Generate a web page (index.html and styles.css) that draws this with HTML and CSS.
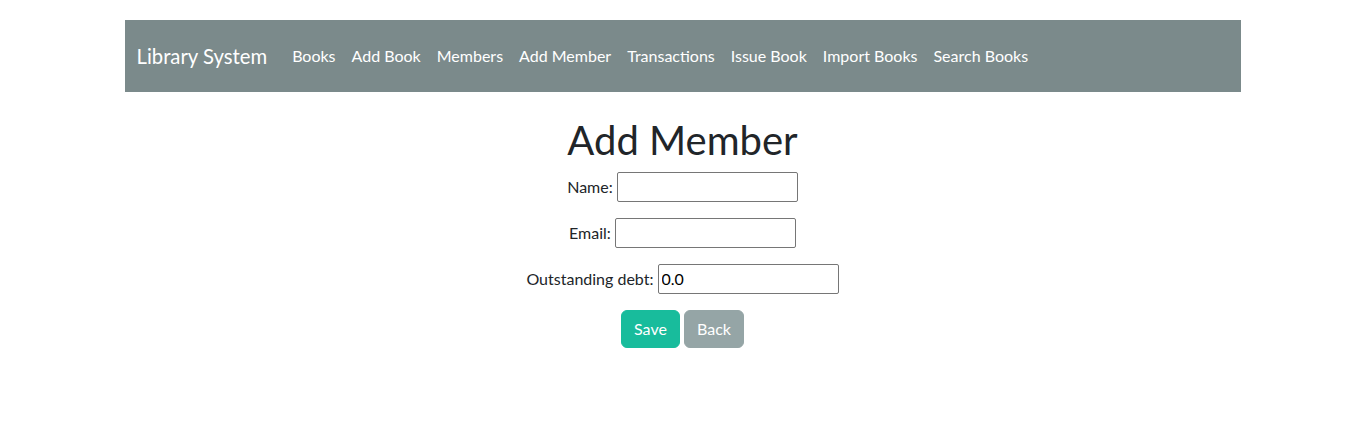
FILE: index.html
```html
<!DOCTYPE html>
<html lang="en">
<head>
<meta charset="utf-8">
<title>Add Member</title>
<link rel="stylesheet" href="styles.css">
</head>
<body>
<div class="container">
  <nav class="navbar">
    <a class="brand" href="#">Library System</a>
    <ul class="nav">
      <li><a class="nav-link" href="#">Books</a></li>
      <li><a class="nav-link" href="#">Add Book</a></li>
      <li><a class="nav-link" href="#">Members</a></li>
      <li><a class="nav-link" href="#">Add Member</a></li>
      <li><a class="nav-link" href="#">Transactions</a></li>
      <li><a class="nav-link" href="#">Issue Book</a></li>
      <li><a class="nav-link" href="#">Import Books</a></li>
      <li><a class="nav-link" href="#">Search Books</a></li>
    </ul>
  </nav>
  <main class="content">
    <h1 class="title">Add Member</h1>
    <form class="form">
      <p class="row"><label for="name">Name:</label> <input class="field" type="text" id="name"></p>
      <p class="row"><label for="email">Email:</label> <input class="field" type="text" id="email"></p>
      <p class="row"><label for="debt">Outstanding debt:</label> <input class="field" type="text" id="debt" value="0.0"></p>
      <div class="actions"><button class="btn btn-save" type="button">Save</button> <a class="btn btn-back" href="#">Back</a></div>
    </form>
  </main>
</div>
</body>
</html>
```
FILE: styles.css
```css
* { box-sizing: border-box; }
body {
  margin: 0;
  font-family: Lato, "Noto Sans", sans-serif;
  font-size: 16px;
  line-height: 1.5;
  color: #212529;
  background: #fff;
}
.container {
  width: 1116px;
  margin: 20px auto 0;
}
.navbar {
  display: flex;
  align-items: center;
  background: #7b8a8b;
  padding: 16px 12px;
  height: 72px;
}
.brand {
  color: #fff;
  text-decoration: none;
  font-size: 20.3px;
  line-height: 30px;
  padding: 5px 0;
  margin-right: 17px;
}
.nav {
  display: flex;
  list-style: none;
  margin: 0;
  padding: 0;
}
.nav-link {
  display: block;
  color: #fff;
  text-decoration: none;
  padding: 8px;
  font-size: 16px;
  line-height: 22px;
}
.content {
  text-align: center;
  padding-top: 24px;
}
.title {
  font-size: 40px;
  font-weight: 400;
  line-height: 48px;
  margin: 0 0 6px;
}
.form { margin: 0; }
.row {
  margin: 0 0 16px;
  line-height: 30px;
  height: 30px;
}
.row label { vertical-align: middle; }
.field {
  width: 181px;
  height: 30px;
  font-family: inherit;
  font-size: 16px;
  line-height: 22px;
  padding: 3px 3px;
  border: 1px solid #767676;
  border-radius: 2px;
  color: #000;
  vertical-align: middle;
}
.actions { line-height: 38px; }
.btn {
  display: inline-block;
  vertical-align: middle;
  font-family: inherit;
  font-size: 16px;
  line-height: 22px;
  padding: 7px 12px;
  border: 1px solid transparent;
  border-radius: 6px;
  color: #fff;
  text-decoration: none;
  cursor: pointer;
}
.btn-save { background: #18bc9c; border-color: #18bc9c; }
.btn-back { background: #95a5a6; border-color: #95a5a6; }
```
